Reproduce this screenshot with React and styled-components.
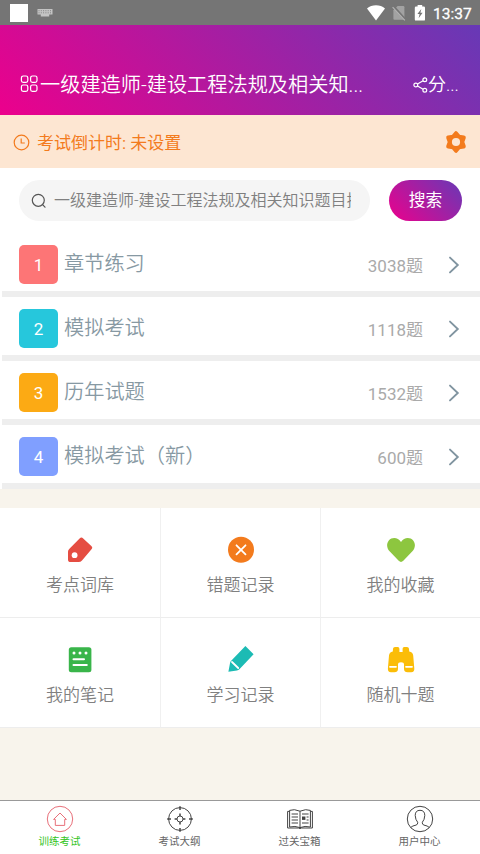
import React from "react";
import styled, { createGlobalStyle } from "styled-components";

const GlobalStyle = createGlobalStyle`
  * {
    box-sizing: border-box;
  }

  body {
    margin: 0;
    background-color: #f8f4ec;
    font-family: Roboto, "Noto Sans CJK SC", sans-serif;
  }
`;

const Page = styled.div`
  width: 480px;
  height: 854px;
  display: flex;
  flex-direction: column;
  overflow: hidden;
  background-color: #f8f4ec;
`;

const StatusBar = styled.div`
  height: 25px;
  flex: none;
  display: flex;
  align-items: center;
  padding: 0 9px 0 10px;
  background-color: #757575;
  color: #fff;
`;

const StatusSquare = styled.div`
  width: 18px;
  height: 18px;
  margin-right: 9px;
  background-color: #fff;
`;

const StatusIcons = styled.div`
  display: flex;
  align-items: center;
  margin-left: auto;
`;

const StatusTime = styled.div`
  width: 38px;
  margin-left: 7px;
  font-size: 15.5px;
  font-weight: 400;
  line-height: 25px;
  padding-top: 3px;
  white-space: nowrap;
  -webkit-text-stroke: 0.3px #fff;
`;

const Header = styled.div`
  height: 90px;
  flex: none;
  display: flex;
  align-items: center;
  padding: 28px 20px 0;
  color: #fff;
  background-image: linear-gradient(45deg, #ec008c, #6739b6);
`;

const HeaderTitle = styled.div`
  flex: 1;
  margin-left: 1px;
  font-size: 20.2px;
  font-weight: 350;
  line-height: 30px;
  padding-top: 2px;
  white-space: nowrap;
`;

const HeaderShare = styled.div`
  display: flex;
  align-items: center;
  width: 47px;
  font-size: 18px;
  font-weight: 350;
  line-height: 30px;
  padding-top: 1px;
  white-space: nowrap;
`;

const Notice = styled.div`
  height: 53px;
  flex: none;
  display: flex;
  align-items: center;
  padding: 1px 12px 0 13px;
  color: #f37b1d;
  background-color: #fde6d2;
`;

const NoticeText = styled.div`
  flex: 1;
  margin-left: 7px;
  font-size: 17px;
  line-height: 24px;
  padding-top: 2px;
`;

const SearchBar = styled.div`
  height: 65px;
  flex: none;
  display: flex;
  align-items: flex-start;
  justify-content: space-between;
  padding: 12px 18px 0 19px;
  background-color: #fff;
`;

const SearchInput = styled.div`
  width: 351px;
  height: 41px;
  display: flex;
  align-items: center;
  padding: 0 19px 0 12px;
  border-radius: 21px;
  background-color: #f5f5f5;
`;

const SearchText = styled.div`
  flex: 1;
  margin-left: 7px;
  overflow: hidden;
  color: #808080;
  font-size: 16px;
  font-weight: 350;
  line-height: 24px;
  white-space: nowrap;
`;

const SearchButton = styled.div`
  width: 73px;
  height: 41px;
  border-radius: 21px;
  color: #fff;
  font-size: 16.8px;
  line-height: 41px;
  text-align: center;
  background-image: linear-gradient(45deg, #ec008c, #6739b6);
`;

const RowList = styled.div`
  flex: none;
  background-color: #fff;
`;

const Row = styled.div`
  height: 64px;
  display: flex;
  align-items: flex-start;
  padding: 12px 20px 0 19px;
  background: linear-gradient(#eeeeee, #eeeeee) 2px 58px / 478px 6px no-repeat #fff;
`;

const RowBadge = styled.div`
  width: 39px;
  height: 39px;
  border-radius: 5px;
  color: #fff;
  font-size: 17px;
  line-height: 40px;
  text-align: center;
  background-color: ${props => props.bg};
`;

const RowTitle = styled.div`
  flex: 1;
  margin-left: 6px;
  color: #8799a3;
  font-size: 20.2px;
  font-weight: 350;
  line-height: 30px;
  padding-top: 4px;
`;

const RowCount = styled.div`
  color: #aaa;
  font-size: 17px;
  line-height: 26px;
  padding-top: 8px;
  margin-right: 25px;
`;

const RowArrow = styled.svg`
  width: 12px;
  height: 18px;
  margin-top: 11px;
`;

const Grid = styled.div`
  flex: none;
  display: grid;
  grid-template-columns: 161px 160px 159px;
  grid-auto-rows: 110px;
  height: 220px;
  margin-top: 18.5px;
  background-color: #fff;
`;

const Cell = styled.div`
  display: flex;
  flex-direction: column;
  align-items: center;
  padding-top: 28px;
  border-right: ${props => (props.last ? "none" : "1px solid #f0f0f0")};
  border-bottom: 1px solid #ededed;
`;

const CellIcon = styled.svg`
  width: 28px;
  height: 28px;
  flex: none;
`;

const CellLabel = styled.div`
  margin-top: 8px;
  color: #808080;
  font-size: 17px;
  font-weight: 350;
  line-height: 26px;
`;

const TabBar = styled.div`
  height: 54px;
  flex: none;
  display: grid;
  grid-template-columns: repeat(4, 120px);
  margin-top: auto;
  border-top: 1px solid #999;
  background-color: #fff;
`;

const Tab = styled.div`
  display: flex;
  flex-direction: column;
  align-items: center;
  padding: 4px 1px 0 0;
  color: ${props => (props.active ? "#33c41c" : "#666")};
`;

const TabIcon = styled.svg`
  width: 28px;
  height: 28px;
  fill: none;
  stroke: ${props => props.color};
`;

const TabLabel = styled.div`
  margin-top: 1px;
  font-size: 10.5px;
  line-height: 16px;
`;

const rows = [
  { title: "章节练习", count: "3038题", bg: "#fd7576" },
  { title: "模拟考试", count: "1118题", bg: "#26c7dc" },
  { title: "历年试题", count: "1532题", bg: "#fcaa14" },
  { title: "模拟考试（新）", count: "600题", bg: "#809fff" },
];

const cells = [
  {
    label: "考点词库",
    icon: (
      <>
        <path
          d="M13.6 2.4 Q15.4 .8 17.2 2.4 L25.6 10.2 Q27 11.6 25.7 13 L16 24.4 Q14.6 26 12.6 26 H4.6 Q2 26 2 23.4 V15.8 Q2 14 3.2 12.9 Z"
          fill="#e54d42"
        />
        <circle cx="8.6" cy="19.2" r="2.9" fill="#fff" />
      </>
    ),
  },
  {
    label: "错题记录",
    icon: (
      <>
        <circle cx="14" cy="13.8" r="13" fill="#f37b1d" />
        <path d="M9.5 9.3 18.5 18.3 M18.5 9.3 9.5 18.3" stroke="#fff" strokeWidth="1.8" strokeLinecap="round" />
      </>
    ),
  },
  {
    label: "我的收藏",
    icon: (
      <path
        d="M14 6 C17 .8 23.4 1.2 26 4.2 C28.8 7.4 28.4 12 25.4 15.2 L16.3 24.8 Q14 27 11.7 24.8 L2.6 15.2 C-.4 12 -.8 7.4 2 4.2 C4.6 1.2 11 .8 14 6 Z"
        fill="#8dc63f"
      />
    ),
  },
  {
    label: "我的笔记",
    icon: (
      <>
        <rect x="2.8" y="1.2" width="22.6" height="25" rx="2.5" fill="#39b54a" />
        <g fill="#fff">
          <circle cx="8" cy="7" r="1.5" />
          <circle cx="14" cy="7" r="1.5" />
          <circle cx="20" cy="7" r="1.5" />
        </g>
        <path d="M7.5 13.3H18 M7.5 19H20.8" stroke="#fff" strokeWidth="2" strokeLinecap="round" />
      </>
    ),
  },
  {
    label: "学习记录",
    icon: (
      <>
        <path d="M18.4 0 26.6 8.2 12.4 23.2 Q11.4 24.2 10 24.4 L1.4 25.8 3 17.2 Q3.2 15.8 4.2 14.8 Z" fill="#1cbbb4" />
        <path d="M5 16 11.2 22" stroke="#fff" strokeWidth="1.8" strokeLinecap="round" />
      </>
    ),
  },
  {
    label: "随机十题",
    icon: (
      <>
        <path
          d="M8 1h2.8Q12.4 1 12.4 2.8V6h3.2V2.8Q15.6 1 17.2 1H20Q21.8 1 22 2.8L22.2 5.5Q25.8 6.2 26.2 9.5L27.3 22.5Q27.6 26.2 24.2 26.2H20.6Q17.2 26.2 17 23V18.6Q17 16.2 14 16.2T11 18.6V23Q10.8 26.2 7.4 26.2H4Q.6 26.2.9 22.5L2 9.5Q2.4 6.2 5.8 5.5L6 2.8Q6.2 1 8 1Z"
          fill="#fbbd08"
        />
        <path d="M3 20.8H9 M19 20.8H25" stroke="#fff" strokeWidth="1.8" strokeLinecap="round" />
      </>
    ),
  },
];

const tabs = [
  {
    label: "训练考试",
    color: "#e8707a",
    active: true,
    icon: (
      <>
        <circle cx="14" cy="14" r="12.7" />
        <path d="M7.6 14.4 14 8l6.4 6.4H18.7V20.4H9.3V14.4Z" />
      </>
    ),
  },
  {
    label: "考试大纲",
    color: "#444",
    icon: (
      <>
        <circle cx="14" cy="14" r="11.4" />
        <circle cx="14" cy="14" r="3" />
        <path d="M14 1.2V5 M14 23V26.8 M1.2 14H5 M23 14H26.8 M14 8.6V11 M14 17V19.4 M8.6 14H11 M17 14H19.4" strokeWidth="1.5" />
      </>
    ),
  },
  {
    label: "过关宝箱",
    color: "#444",
    icon: (
      <>
        <path d="M14 6.2Q8 3.6 3.6 5.4V22Q9 20.6 14 22.6 19 20.6 24.4 22V5.4Q20 3.6 14 6.2V22.6 M3.6 6.4H1.6V23H12.4Q14 24.2 15.6 23H26.4V6.4H24.4" />
        <path d="M5.6 9H12 M5.6 12H12 M5.6 15H12 M5.6 18H12 M16 9H22.6 M20.6 12H22.6 M20.6 15H22.6 M16 18H22.6" strokeWidth="1.2" />
        <path d="M16 13.2H19.4" strokeWidth="3.4" />
      </>
    ),
  },
  {
    label: "用户中心",
    color: "#444",
    icon: (
      <>
        <circle cx="14" cy="14" r="12.7" />
        <path d="M4.8 22.4Q6.4 20.8 10 20.1 12 19.6 11.7 17.3 9.4 14.8 9.2 10.4 9.3 5.3 14 5.3T18.8 10.4Q18.6 14.8 16.3 17.3 16 19.6 18 20.1 21.6 20.8 23.2 22.4" />
      </>
    ),
  },
];

function KeyboardIcon() {
  return (
    <svg width="16" height="10" viewBox="0 0 16 10">
      <path d="M.5 1H15.5V6.4H12.2V8.6H3.8V6.4H.5Z" fill="#c4c4c4" />
      <path d="M1.5 2.7H14.5 M1.5 4.8H14.5" stroke="#757575" strokeWidth=".8" strokeDasharray="1 1.3" />
    </svg>
  );
}

function WifiIcon() {
  return (
    <svg width="18" height="16" viewBox="0 0 18 16">
      <path d="M9 15.6 0 3.6Q3.8.3 9 .3T18 3.6Z" fill="#fff" />
    </svg>
  );
}

const NoSimSvg = styled.svg`
  margin-left: 7px;
`;

function NoSimIcon() {
  return (
    <NoSimSvg width="14" height="16" viewBox="0 0 14 16">
      <path d="M5.6 1H11.2Q12.4 1 12.4 2.2V14.8H2.4Q1.4 14.8 1.4 13.6V5.2Z" fill="#a2a2a2" />
      <path d="M1.6 1.6 13 14.4" stroke="#757575" strokeWidth="2.4" />
      <path d="M.6 2.2 12.8 15.4" stroke="#b4b4b4" strokeWidth="1.2" />
    </NoSimSvg>
  );
}

const BatterySvg = styled.svg`
  margin-left: 8px;
`;

function BatteryIcon() {
  return (
    <BatterySvg width="12" height="16" viewBox="0 0 12 16">
      <path d="M3.6 0H8.2V1.6H9.8Q11 1.6 11 2.8V14.4Q11 15.6 9.8 15.6H2Q.8 15.6.8 14.4V2.8Q.8 1.6 2 1.6H3.6Z" fill="#fff" />
      <path d="M7.3 4 3.4 9H5.6L4.6 13.2 8.6 7.8H6.4Z" fill="#757575" />
    </BatterySvg>
  );
}

function AppsIcon() {
  return (
    <svg width="19" height="18" viewBox="0 0 19 18" fill="none" stroke="#fff" strokeWidth="1.2">
      <rect x="1.4" y="1" width="6.4" height="6.4" rx="1.8" />
      <rect x="10.6" y="1" width="6.4" height="6.4" rx="1.8" />
      <rect x="1.4" y="10" width="6.4" height="6.4" rx="1.8" />
      <rect x="10.6" y="10" width="6.4" height="6.4" rx="1.8" />
    </svg>
  );
}

function ShareIcon() {
  return (
    <svg width="15" height="16" viewBox="0 0 15 16" fill="none" stroke="#fff" strokeWidth="1.2">
      <circle cx="2.8" cy="8" r="1.9" />
      <circle cx="11.8" cy="2.8" r="1.9" />
      <circle cx="11.8" cy="13.2" r="1.9" />
      <path d="M4.5 7 10.1 3.8 M4.5 9 10.1 12.2" />
    </svg>
  );
}

function ClockIcon() {
  return (
    <svg width="17" height="17" viewBox="0 0 17 17" fill="none" stroke="#f37b1d" strokeWidth="1.2">
      <circle cx="8.5" cy="8.5" r="7.3" />
      <path d="M8.2 4.6V9H11.8" />
    </svg>
  );
}

function GearIcon() {
  return (
    <svg width="24" height="24" viewBox="0 0 24 24">
      <path
        d="M12 3.2 15 6.8 19.8 7.5 18.2 12 19.8 16.5 15 17.2 12 20.8 9 17.2 4.2 16.5 5.8 12 4.2 7.5 9 6.8Z"
        fill="#f37b1d"
        stroke="#f37b1d"
        strokeWidth="4"
        strokeLinejoin="round"
      />
      <circle cx="12" cy="12" r="4.1" fill="#fde6d2" />
    </svg>
  );
}

function SearchIcon() {
  return (
    <svg width="16" height="16" viewBox="0 0 16 16" fill="none" stroke="#555" strokeWidth="1.2" strokeLinecap="round">
      <circle cx="7.3" cy="7.3" r="6" />
      <path d="M11.6 11.6 14 14.2" />
    </svg>
  );
}

export default function App() {
  return (
    <Page>
      <GlobalStyle />
      <StatusBar>
        <StatusSquare />
        <KeyboardIcon />
        <StatusIcons>
          <WifiIcon />
          <NoSimIcon />
          <BatteryIcon />
          <StatusTime>13:37</StatusTime>
        </StatusIcons>
      </StatusBar>

      <Header>
        <AppsIcon />
        <HeaderTitle>一级建造师-建设工程法规及相关知...</HeaderTitle>
        <HeaderShare>
          <ShareIcon />
          分...
        </HeaderShare>
      </Header>

      <Notice>
        <ClockIcon />
        <NoticeText>考试倒计时: 未设置</NoticeText>
        <GearIcon />
      </Notice>

      <SearchBar>
        <SearchInput>
          <SearchIcon />
          <SearchText>一级建造师-建设工程法规及相关知识题目搜索</SearchText>
        </SearchInput>
        <SearchButton>搜索</SearchButton>
      </SearchBar>

      <RowList>
        {rows.map((row, i) => (
          <Row key={row.title}>
            <RowBadge bg={row.bg}>{i + 1}</RowBadge>
            <RowTitle>{row.title}</RowTitle>
            <RowCount>{row.count}</RowCount>
            <RowArrow viewBox="0 0 12 18">
              <path d="M2 1.6 9.8 9 2 16.4" fill="none" stroke="#8094a0" strokeWidth="1.9" strokeLinecap="round" />
            </RowArrow>
          </Row>
        ))}
      </RowList>

      <Grid>
        {cells.map((cell, i) => (
          <Cell key={cell.label} last={i % 3 === 2 ? 1 : 0}>
            <CellIcon viewBox="0 0 28 28">{cell.icon}</CellIcon>
            <CellLabel>{cell.label}</CellLabel>
          </Cell>
        ))}
      </Grid>

      <TabBar>
        {tabs.map(tab => (
          <Tab key={tab.label} active={tab.active ? 1 : 0}>
            <TabIcon viewBox="0 0 28 28" color={tab.color}>{tab.icon}</TabIcon>
            <TabLabel>{tab.label}</TabLabel>
          </Tab>
        ))}
      </TabBar>
    </Page>
  );
}
